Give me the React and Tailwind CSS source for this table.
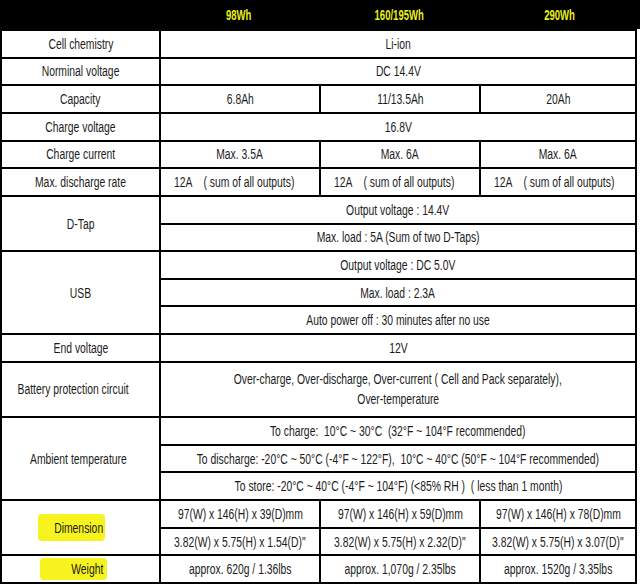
import React from 'react';

const font = "font-['Liberation_Sans',Arial,sans-serif]";

// Arial Narrow is not available, so the text is squeezed horizontally instead
const T = ({ children, className = 'scale-x-[0.74]' }) => (
    <span className={`inline-block whitespace-pre ${className}`}>{children}</span>
);

const Cell = ({ children, className = '' }) => (
    <div className={`flex items-center justify-center bg-white text-center whitespace-nowrap ${className}`}>{children}</div>
);

const Gray = ({ children, className = '' }) => (
    <Cell className={`bg-[#f2f2f2] ${className}`}>{children}</Cell>
);

const Sum = ({ gray }) => {
    const C = gray ? Gray : Cell;
    return (
        <C className="justify-start pl-[13px]">
            <T className="scale-x-[0.74] origin-left">12A    ( sum of all outputs)</T>
        </C>
    );
};

const App = () => {
    return (
        <div className={`w-[640px] h-[584px] bg-white text-[14px] leading-none text-[#1c1c1c] ${font}`}>
            {/* Header */}
            <div className="grid grid-cols-[159px_160px_160px_161px] h-[29px] bg-black text-[14px] font-bold text-[#e9f01c]">
                <div />
                <div className="flex items-center justify-center"><T className="scale-x-[0.68]">98Wh</T></div>
                <div className="flex items-center justify-center"><T className="scale-x-[0.68]">160/195Wh</T></div>
                <div className="flex items-center justify-center"><T className="scale-x-[0.68]">290Wh</T></div>
            </div>

            {/* Spec table */}
            <div className="grid w-[637px] h-[555px] bg-black p-[2px] gap-[2px] grid-cols-[157px_158px_158px_154px] grid-rows-[repeat(20,minmax(0,1fr))]">
                <Cell><T>Cell chemistry</T></Cell>
                <Cell className="col-span-3"><T>Li-ion</T></Cell>

                <Cell><T>Norminal voltage</T></Cell>
                <Cell className="col-span-3"><T>DC 14.4V</T></Cell>

                <Cell><T>Capacity</T></Cell>
                <Cell><T>6.8Ah</T></Cell>
                <Gray><T>11/13.5Ah</T></Gray>
                <Cell><T>20Ah</T></Cell>

                <Cell><T>Charge voltage</T></Cell>
                <Cell className="col-span-3"><T>16.8V</T></Cell>

                <Cell><T>Charge current</T></Cell>
                <Cell><T>Max. 3.5A</T></Cell>
                <Gray><T>Max. 6A</T></Gray>
                <Cell><T>Max. 6A</T></Cell>

                <Cell><T>Max. discharge rate</T></Cell>
                <Sum />
                <Sum gray />
                <Sum />

                <Cell className="row-span-2"><T>D-Tap</T></Cell>
                <Cell className="col-span-3"><T>Output voltage : 14.4V</T></Cell>
                <Cell className="col-span-3"><T>Max. load : 5A (Sum of two D-Taps)</T></Cell>

                <Cell className="row-span-3"><T>USB</T></Cell>
                <Cell className="col-span-3"><T>Output voltage : DC 5.0V</T></Cell>
                <Cell className="col-span-3"><T>Max. load : 2.3A</T></Cell>
                <Cell className="col-span-3"><T>Auto power off : 30 minutes after no use</T></Cell>

                <Cell><T>End voltage</T></Cell>
                <Cell className="col-span-3"><T>12V</T></Cell>

                <Cell className="row-span-2 pr-[14px]"><T>Battery protection circuit</T></Cell>
                <Cell className="row-span-2 col-span-3 flex-col gap-[6px]">
                    <T>Over-charge, Over-discharge, Over-current ( Cell and Pack separately),</T>
                    <T>Over-temperature</T>
                </Cell>

                <Cell className="row-span-3 pr-[4px]"><T>Ambient temperature</T></Cell>
                <Cell className="col-span-3"><T>To charge:  10°C ~ 30°C  (32°F ~ 104°F recommended)</T></Cell>
                <Cell className="col-span-3"><T>To discharge: -20°C ~ 50°C (-4°F ~ 122°F),  10°C ~ 40°C (50°F ~ 104°F recommended)</T></Cell>
                <Cell className="col-span-3"><T>To store: -20°C ~ 40°C (-4°F ~ 104°F) (&lt;85% RH )  ( less than 1 month)</T></Cell>

                {/* marker highlight behind the label */}
                <Cell className="row-span-2 justify-start pl-[36px]">
                    <div className="flex items-center justify-end w-[67px] h-[27px] pr-[2px] bg-[#f6f31f] rounded-[4px]">
                        <T className="scale-x-[0.74] origin-right">Dimension</T>
                    </div>
                </Cell>
                <Cell><T>97(W) x 146(H) x 39(D)mm</T></Cell>
                <Gray><T>97(W) x 146(H) x 59(D)mm</T></Gray>
                <Cell><T>97(W) x 146(H) x 78(D)mm</T></Cell>
                <Cell><T>3.82(W) x 5.75(H) x 1.54(D)"</T></Cell>
                <Gray><T>3.82(W) x 5.75(H) x 2.32(D)"</T></Gray>
                <Cell><T>3.82(W) x 5.75(H) x 3.07(D)"</T></Cell>

                <Cell className="justify-start pl-[38px]">
                    <div className="flex items-center justify-end w-[67px] h-[22px] pr-[4px] bg-[#f6f31f] rounded-[4px]">
                        <T className="scale-x-[0.74] origin-right">Weight</T>
                    </div>
                </Cell>
                <Cell><T>approx. 620g / 1.36lbs</T></Cell>
                <Gray><T>approx. 1,070g / 2.35lbs</T></Gray>
                <Cell><T>approx. 1520g / 3.35lbs</T></Cell>
            </div>
        </div>
    );
};

export default App;
